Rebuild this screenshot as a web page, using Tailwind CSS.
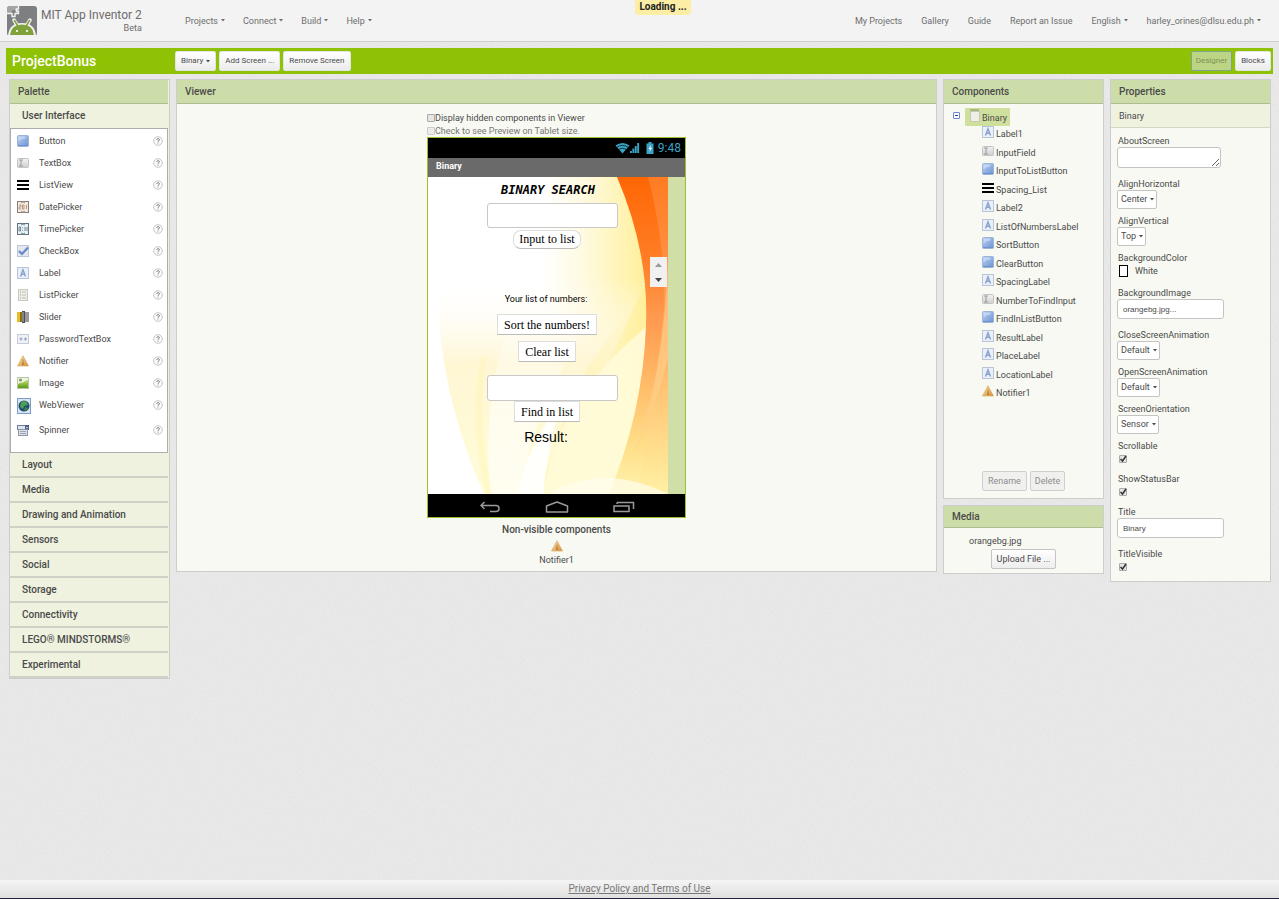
<!DOCTYPE html>
<html lang="en">
<head>
<meta charset="utf-8">
<title>MIT App Inventor 2</title>
<script src="https://cdn.jsdelivr.net/npm/@tailwindcss/browser@4"></script>
</head>
<body class="relative isolate flex min-h-screen flex-col bg-[#eaeaea] font-['Roboto',sans-serif] text-[9px] leading-3 text-[#4a4a4a]">

<svg class="absolute inset-0 -z-10 h-full w-full opacity-10" aria-hidden="true">
  <filter id="grain"><feTurbulence type="fractalNoise" baseFrequency="0.6" numOctaves="2"/><feColorMatrix type="saturate" values="0"/></filter>
  <rect width="100%" height="100%" filter="url(#grain)"/>
</svg>

<!-- Icon library -->
<svg class="absolute size-0" aria-hidden="true">
  <defs>
    <linearGradient id="gBlue" x1="0" y1="0" x2="1" y2="1"><stop offset="0" stop-color="#b9d0f2"/><stop offset="1" stop-color="#6d93d3"/></linearGradient>
    <linearGradient id="gGrey" x1="0" y1="0" x2="0" y2="1"><stop offset="0" stop-color="#f2f2f2"/><stop offset="1" stop-color="#cfcfcf"/></linearGradient>
    <linearGradient id="gWarn" x1="0" y1="0" x2="1" y2="1"><stop offset="0" stop-color="#fbe7b0"/><stop offset="1" stop-color="#d98a2b"/></linearGradient>
    <linearGradient id="gGreen" x1="0" y1="0" x2="0" y2="1"><stop offset="0" stop-color="#c3df70"/><stop offset="1" stop-color="#5c9a16"/></linearGradient>
  </defs>
  <symbol id="i-button" viewBox="0 0 12 12"><rect x=".5" y=".5" width="11" height="11" rx="1" fill="url(#gBlue)" stroke="#9db4da"/><path d="M1 10h10v1H1z" fill="#6e90cb"/><path d="M1.500 1.500h7v2q-4 .2-7 3z" fill="#d5e3f8" opacity=".6"/></symbol>
  <symbol id="i-textbox" viewBox="0 0 12 12"><rect x=".5" y="1.500" width="11" height="9" rx="1" fill="url(#gGrey)" stroke="#c4c4c4"/><path d="M2 3h4M2 9h4M4 3v6" stroke="#9a9a9a" fill="none"/></symbol>
  <symbol id="i-listview" viewBox="0 0 12 12"><path d="M0 2h12M0 6h12M0 10h12" stroke="#000" stroke-width="2"/></symbol>
  <symbol id="i-date" viewBox="0 0 12 12"><rect x=".5" y=".5" width="11" height="11" fill="#f3e9df" stroke="#8a7f78"/><path d="M2 4h2v2H2v2h2M5.500 4h1.500v4H5.500zM9.500 4v4M4 2l2-1 2 1M4 10l2 1 2-1" stroke="#b59a88" fill="none"/></symbol>
  <symbol id="i-time" viewBox="0 0 12 12"><rect x=".5" y=".5" width="11" height="11" fill="#e6eff4" stroke="#68747c"/><path d="M2 4h1.500v4H2zM5.500 4.500v.8M5.500 7v.8M8 4v4M10 4v4M4 2l2-1 2 1M4 10l2 1 2-1" stroke="#6f8c9d" fill="none"/></symbol>
  <symbol id="i-check" viewBox="0 0 12 12"><rect x=".5" y=".5" width="11" height="11" fill="#e3e8f1" stroke="#bcc6d8"/><path d="M2 6l3 3 6-6.500" stroke="#6487c8" stroke-width="2.200" fill="none"/></symbol>
  <symbol id="i-label" viewBox="0 0 12 12"><rect x=".5" y=".5" width="11" height="11" fill="#eaf0f8" stroke="#b9c4d8"/><path d="M3.500 9.500L6 2.800l2.500 6.700M4.300 7.300h3.400" stroke="#8aa2d0" stroke-width="1.500" fill="none"/></symbol>
  <symbol id="i-listpicker" viewBox="0 0 12 12"><rect x="1.500" y=".5" width="9" height="11" fill="#efefe9" stroke="#c9c9c0"/><path d="M3 3h1M3 6h1M3 9h1" stroke="#86a75c"/><path d="M5 3h4M5 6h4M5 9h4" stroke="#bbb"/></symbol>
  <symbol id="i-slider" viewBox="0 0 12 12"><path d="M0 1h5v10H0z" fill="#e5bd25"/><path d="M3 1h2v10H3z" fill="#8b7018"/><path d="M5 0h3v12H5z" fill="#4e4e4e"/><path d="M8 1h4v10H8z" fill="#9a9a9a"/><path d="M6 1v10" stroke="#bbb"/></symbol>
  <symbol id="i-password" viewBox="0 0 12 12"><rect x=".5" y="1.500" width="11" height="9" fill="#eef1f6" stroke="#c5ccd8"/><path d="M2.500 6h3M7 6h3M4 4.500v3M8.500 4.500v3" stroke="#8fa2c4" stroke-width="1.200"/></symbol>
  <symbol id="i-warn" viewBox="0 0 12 12"><path d="M6 .8L11.500 11H.5z" fill="url(#gWarn)" stroke="#d3ad68" stroke-width=".7"/><path d="M6 3l1 7H5z" fill="#a8824e"/></symbol>
  <symbol id="i-image" viewBox="0 0 12 12"><rect x=".5" y=".5" width="11" height="11" fill="#eef4e0" stroke="#b9c6a4"/><path d="M1 7q3-2 5-1.500Q8 3 11 3v8H1z" fill="url(#gGreen)"/><circle cx="3.500" cy="3" r="1.500" fill="#7f9958"/></symbol>
  <symbol id="i-web" viewBox="0 0 14 16"><rect x=".5" y=".5" width="13" height="15" fill="#d8e5f5" stroke="#7e9cc4"/><circle cx="7" cy="8" r="5.500" fill="#244a74"/><path d="M4 4q3-2 6 0l1 3-4 1-1 3-3-2z" fill="#4ca055"/><path d="M8 9l3 1-2 3-2-1z" fill="#3a8a45"/></symbol>
  <symbol id="i-spinner" viewBox="0 0 12 12"><rect x=".5" y="1.500" width="11" height="4" fill="#dfe6f0" stroke="#6b7c99"/><path d="M8 1h4v5H8z" fill="#4c6089"/><path d="M9 3h2l-1 1.500z" fill="#fff"/><rect x="1.500" y="5.500" width="9" height="6" fill="#dcdfe4" stroke="#8d97a8"/><path d="M3 7.500h6M3 9.500h6" stroke="#9aa6ba"/></symbol>
  <symbol id="i-screen" viewBox="0 0 12 14"><path d="M1 0h9v3H1z" fill="#a9b87c"/><rect x="1.500" y="2.500" width="9" height="10" fill="#efefe8" stroke="#c3c9b2"/></symbol>
  <symbol id="i-help" viewBox="0 0 10 10"><circle cx="5" cy="5" r="4.300" fill="#fbfbfb" stroke="#b8b8b8" stroke-width=".8"/><path d="M3.700 4q0-1.400 1.400-1.400T6.400 4Q6.400 4.700 5 5.300v.6M5 6.600v1" stroke="#8a8a8a" stroke-width="1" fill="none"/></symbol>
  <symbol id="i-caret" viewBox="0 0 4 3"><path d="M0 0h4L2 2.500z" fill="currentColor"/></symbol>
</svg>

<div role="status" class="absolute left-[635px] top-0 z-10 h-[15px] w-14 rounded-b-sm bg-[#fdeea6] text-center text-[10px] font-bold leading-[14px] text-[#222]">Loading ...</div>

<header class="flex h-[42px] items-center border-b border-[#cfcfcf] bg-[#f3f3f3] text-[#6d6d6d]">
  <a href="#" class="flex w-[176px] shrink-0 items-center gap-1 pl-[7px]">
    <svg class="size-[30px]" viewBox="0 0 30 30" aria-hidden="true">
      <rect width="30" height="30" rx="3" fill="#7d7f81"/>
      <path d="M0 7h5q-1-3 2-3t2 3h2V0H3Q0 0 0 3z" fill="#a3a5a6"/>
      <path d="M0 7.500h5v3h3v-3h3.500V5.200H9.300V3h2.200V0" fill="none" stroke="#f3f3f3" stroke-width="1.400"/>
      <path d="M7 14l3 5M23 14l-3 5" stroke="#f3f3f3" stroke-width="3.500" stroke-linecap="round"/>
      <path d="M1 30Q2 17 15 17t14 13z" fill="#f3f3f3"/>
      <path d="M3 29Q4 18.500 15 18.500T27 29z" fill="#7fa33a"/>
      <path d="M7.500 14.500l3 5M22.500 14.500l-3 5" stroke="#7fa33a" stroke-width="1.500" stroke-linecap="round"/>
      <circle cx="10" cy="25" r="1.100" fill="#fff"/><circle cx="20" cy="25" r="1.100" fill="#fff"/>
    </svg>
    <span class="flex flex-col items-end"><span class="text-[12px] leading-[14px]">MIT App Inventor 2</span><span class="text-[9px] leading-3">Beta</span></span>
  </a>
  <nav class="flex flex-1 items-center justify-between pl-[9px] pr-[18px]">
    <div class="flex gap-[18px]">
      <button class="flex items-center gap-[3px]">Projects <svg class="h-[3px] w-1"><use href="#i-caret"/></svg></button>
      <button class="flex items-center gap-[3px]">Connect <svg class="h-[3px] w-1"><use href="#i-caret"/></svg></button>
      <button class="flex items-center gap-[3px]">Build <svg class="h-[3px] w-1"><use href="#i-caret"/></svg></button>
      <button class="flex items-center gap-[3px]">Help <svg class="h-[3px] w-1"><use href="#i-caret"/></svg></button>
    </div>
    <div class="flex gap-[19px]">
      <a href="#">My Projects</a><a href="#">Gallery</a><a href="#">Guide</a><a href="#">Report an Issue</a>
      <button class="flex items-center gap-[3px]">English <svg class="h-[3px] w-1"><use href="#i-caret"/></svg></button>
      <button class="flex items-center gap-[3px]">harley_orines@dlsu.edu.ph <svg class="h-[3px] w-1"><use href="#i-caret"/></svg></button>
    </div>
  </nav>
</header>

<div class="mx-1.5 mt-1.5 flex h-[26px] items-center bg-[#8fc204] pr-0.5 text-[8px]">
  <h1 class="w-[169px] pl-1.5 text-[14px] font-medium text-white">ProjectBonus</h1>
  <div class="flex gap-[3px]">
    <button class="flex h-5 items-center gap-[3px] rounded-xs border border-[#e4e4e4] bg-linear-to-b from-white to-[#ececec] px-[5px]">Binary <svg class="h-[3px] w-1"><use href="#i-caret"/></svg></button>
    <button class="h-5 rounded-xs border border-[#e4e4e4] bg-linear-to-b from-white to-[#ececec] px-[5px]">Add Screen ...</button>
    <button class="h-5 rounded-xs border border-[#e4e4e4] bg-linear-to-b from-white to-[#ececec] px-[5px]">Remove Screen</button>
  </div>
  <div class="ml-auto flex gap-[3px]">
    <button disabled class="h-5 rounded-xs border border-[#7fa58a] bg-[#bcd585] px-1 text-[#7d9155]">Designer</button>
    <button class="h-5 rounded-xs border border-[#e4e4e4] bg-linear-to-b from-white to-[#ececec] px-[5px]">Blocks</button>
  </div>
</div>

<main class="flex flex-1 items-start gap-1.5 pl-[9px] pr-2 pt-[5px]">

  <section class="w-[161px] shrink-0 border border-[#cdcdcd] bg-[#eef2df] pr-px">
    <h2 class="h-6 border-b border-[#aebd92] bg-[#cddda9] pl-2 text-[10px] font-medium leading-[23px]">Palette</h2>
    <h3 class="h-6 pl-3 text-[10px] font-medium leading-6">User Interface</h3>
    <ul id="palette" class="border border-[#adadad] bg-white pb-[11px] pl-1.5 pr-1 pt-px"></ul>
    <div id="drawers"></div>
  </section>

  <section class="min-w-0 flex-1 border border-[#cdcdcd] bg-[#f7f9f2]">
    <h2 class="h-6 border-b border-[#aebd92] bg-[#cddda9] pl-2 text-[10px] font-medium leading-[23px]">Viewer</h2>
    <div class="mx-auto w-[259px] pb-[5px] pt-[7px]">
      <label class="flex h-[13px] items-center"><input type="checkbox" class="size-2 shrink-0 appearance-none rounded-[1px] border border-[#a9a9a9] bg-[#e6e6e6]">Display hidden components in Viewer</label>
      <label class="flex h-[13px] items-center pt-px text-[#777]"><input type="checkbox" class="size-2 shrink-0 appearance-none rounded-[1px] border border-[#ccc] bg-[#ececec]">Check to see Preview on Tablet size.</label>

      <div class="border border-[#9cc02b]">
        <div class="flex h-5 items-center justify-end bg-black pr-1 text-[12px] text-[#3ba4c4]">
          <svg class="h-3 w-[25px]" viewBox="0 0 25 12" aria-hidden="true">
            <path d="M.5 3.500Q7.500-1.500 14.500 3.500L7.500 11.500z" fill="currentColor"/><path d="M2 5.200Q7.500 1.500 13 5.200M4 7.300Q7.500 5 11 7.300" fill="none" stroke="#000" stroke-width=".7"/>
            <path d="M15 11V9h1.900v2zM17.400 11V6.500h1.900V11zM19.800 11V4h1.900v7zM22.200 11V1h1.900v10z" fill="currentColor"/>
          </svg>
          <svg class="ml-1.5 mr-1 h-3 w-2" viewBox="0 0 8 12" aria-hidden="true"><path d="M2.500 0h3v1.500H7.500V12H.5V1.500h2z" fill="currentColor"/><path d="M5 3L2.500 7H4l-.7 3L6 6H4.500z" fill="#fff"/></svg>
          9:48
        </div>
        <div class="h-[19px] bg-[#6a6a6a] pl-2 text-[9px] font-bold leading-[17px] text-white">Binary</div>
        <div class="flex h-[317px] bg-[#d0dea8]">
          <div class="relative isolate w-[240px] overflow-hidden bg-white">
            <svg class="absolute inset-0 -z-10 h-full w-full" viewBox="0 0 240 317" preserveAspectRatio="none" aria-hidden="true">
              <defs>
                <linearGradient id="bgWarm" x1="0" x2="1"><stop offset=".48" stop-color="#fff"/><stop offset=".65" stop-color="#fffae0"/><stop offset=".9" stop-color="#fff09c"/></linearGradient>
                <linearGradient id="bgLeaf" x1="0" y1="0" x2="0" y2="1"><stop offset="0" stop-color="#fff" stop-opacity="0"/><stop offset=".4" stop-color="#fff6d4"/><stop offset="1" stop-color="#fffcd8"/></linearGradient>
                <linearGradient id="bgArc" x1="0" y1="0" x2="0" y2="1"><stop offset="0" stop-color="#ff6604"/><stop offset=".25" stop-color="#ff7d25"/><stop offset=".45" stop-color="#ff9a50"/><stop offset=".65" stop-color="#ffbb67"/><stop offset=".85" stop-color="#ffdf8a"/><stop offset="1" stop-color="#fff3ad"/></linearGradient>
                <linearGradient id="bgEdge" x1="0" y1="0" x2="0" y2="1"><stop offset="0" stop-color="#ff852e"/><stop offset=".3" stop-color="#ff9a52"/><stop offset=".6" stop-color="#ffbd70"/><stop offset="1" stop-color="#ffefa0"/></linearGradient>
                <linearGradient id="bgFade" x1="0" y1="0" x2="0" y2="1"><stop offset="0" stop-color="#fff0a0" stop-opacity="0"/><stop offset="1" stop-color="#fff7b4"/></linearGradient>
                <linearGradient id="bgGlow" x1="0" y1="0" x2="0" y2="1"><stop offset="0" stop-color="#fff" stop-opacity="0"/><stop offset=".6" stop-color="#fff"/></linearGradient>
              </defs>
              <path d="M0 0h240v317H0z" fill="url(#bgWarm)"/>
              <path d="M10 100Q8 210 56 317H120Q170 210 220 100z" fill="url(#bgLeaf)"/>
              <path d="M100 110Q52 190 62 317H92Q104 235 150 165Q135 135 120 110z" fill="url(#bgGlow)" opacity=".6"/>
              <path d="M53 180Q40 240 58 317h6Q48 240 58 180z" fill="#fff3a8" opacity=".35"/>
              <path d="M218 120Q165 170 145 220T112 317h75L222 200z" fill="url(#bgFade)"/>
              <path d="M218 150Q170 190 145 232Q120 275 116 317h66Q215 240 218 150z" fill="#fffcdc" opacity=".85"/>
              <path d="M90 317Q98 270 135 222Q118 272 116 317z" fill="#fff" opacity=".9"/>
              <path d="M189 0Q221 75 218 148Q215 235 181 317H240V0z" fill="url(#bgArc)"/>
              <path d="M220 0Q238 70 236 130Q230 200 210 317H240V0z" fill="url(#bgEdge)" opacity=".7"/>
              <path d="M240 75Q237 200 204 280Q232 220 240 180z" fill="#ffd08c" opacity=".6"/>
              <path d="M120 317Q175 285 240 317z" fill="#fffef0" opacity=".7"/>
            </svg>
            <div class="flex flex-col items-center pt-[5px] text-black">
              <p class="font-['DejaVu_Sans_Mono',monospace] text-[12px] font-bold italic leading-4">BINARY SEARCH</p>
              <input aria-label="InputField" class="ml-2 mt-[5px] h-[25px] w-[131px] rounded-[3px] border border-[#c8c8c8] bg-white px-1">
              <button class="mr-0.5 mt-0.5 h-[19px] rounded-lg border border-[#ddd] border-b-[#bbb] bg-white px-[5px] font-['Liberation_Serif',serif] text-[12px] leading-[15px]">Input to list</button>
              <div class="mr-px mt-2 flex h-[30px] w-[17px] flex-col items-center justify-around self-end bg-[#f1f1f1]" aria-hidden="true">
                <svg class="h-1 w-[7px]" viewBox="0 0 7 4"><path d="M0 4h7L3.500 0z" fill="#999"/></svg>
                <svg class="h-1 w-[7px]" viewBox="0 0 7 4"><path d="M0 0h7L3.500 4z" fill="#444"/></svg>
              </div>
              <p class="mr-1 mt-[6px] text-[9px]">Your list of numbers:</p>
              <button class="mr-0.5 mt-[9px] h-[21px] border border-[#ddd] border-b-[#bbb] bg-white px-[6px] font-['Liberation_Serif',serif] text-[12px]">Sort the numbers!</button>
              <button class="mr-0.5 mt-1.5 h-[21px] border border-[#ddd] border-b-[#bbb] bg-white px-[6px] font-['Liberation_Serif',serif] text-[12px]">Clear list</button>
              <input aria-label="NumberToFindInput" class="ml-2 mt-[13px] h-[26px] w-[131px] rounded-[3px] border border-[#c8c8c8] bg-white px-1">
              <button class="mr-0.5 h-[21px] border border-[#ddd] border-b-[#bbb] bg-white px-[6px] font-['Liberation_Serif',serif] text-[12px]">Find in list</button>
              <p class="mr-1 mt-[7px] font-['Liberation_Sans',sans-serif] text-[14px] leading-4">Result:</p>
            </div>
          </div>
        </div>
        <div class="flex h-[23px] items-center justify-center gap-11 bg-black pt-0.5 text-[#9a9a9a]">
          <svg class="h-3 w-[22px]" viewBox="0 0 22 12" fill="none" stroke="currentColor" stroke-width="1.500" aria-hidden="true"><path d="M5.500 1L2 4.500 5.500 8M2 4.500h15q3 0 3 3T17 10.500h-6"/></svg>
          <svg class="h-3 w-6" viewBox="0 0 24 12" fill="none" stroke="currentColor" stroke-width="1.500" aria-hidden="true"><path d="M1.500 11V5L12 1l10.500 4v6z" stroke-linejoin="round"/></svg>
          <svg class="h-3 w-[22px]" viewBox="0 0 22 12" fill="none" stroke="currentColor" stroke-width="1.500" aria-hidden="true"><path d="M1 5h15v5.500H1zM4 1.500h16.500V8M4 1.500v1.500"/></svg>
        </div>
      </div>
      <div class="flex flex-col items-center">
        <p class="mt-[6px] text-[10px] font-medium">Non-visible components</p>
        <svg class="mt-1 h-3 w-3"><use href="#i-warn"/></svg>
        <p class="mt-0.5">Notifier1</p>
      </div>
    </div>
  </section>

  <div class="flex w-[161px] shrink-0 flex-col gap-1.5">
    <section class="border border-[#cdcdcd] bg-[#f7f9f2] pb-[7px]">
      <h2 class="h-6 border-b border-[#aebd92] bg-[#cddda9] pl-2 text-[10px] font-medium leading-[23px]">Components</h2>
      <div class="flex pl-[9px] pt-1">
        <button aria-label="Collapse Binary" class="mt-1 flex size-[7px] items-center rounded-[1px] border border-[#6f87cc] bg-white px-px"><span class="h-px w-full bg-[#2244b5]"></span></button>
        <div class="ml-[5px] flex h-[18px] items-start rounded-[1px] bg-[#cfdf9c] pl-1 pr-[3px]">
          <svg class="mt-px h-[14px] w-3"><use href="#i-screen"/></svg><span class="pl-px pt-1">Binary</span>
        </div>
      </div>
      <ul id="tree" class="flex h-[278px] flex-col pl-[38px]"></ul>
      <div class="mt-[67px] flex gap-[3px] pl-[38px] text-[#8d8d8d]">
        <button disabled class="h-5 rounded-xs border border-[#cfcfcf] bg-[#f0f0ee] px-[5px]">Rename</button>
        <button disabled class="h-5 rounded-xs border border-[#cfcfcf] bg-[#f0f0ee] px-1">Delete</button>
      </div>
    </section>
    <section class="border border-[#cdcdcd] bg-[#f7f9f2] pb-1">
      <h2 class="h-[22px] border-b border-[#aebd92] bg-[#cddda9] pl-2 text-[10px] font-medium leading-[22px]">Media</h2>
      <p class="pl-[25px] pt-[7px]">orangebg.jpg</p>
      <button class="mx-auto mt-0.5 block h-5 rounded-xs border border-[#c4c4c4] bg-linear-to-b from-white to-[#ededed] px-[5px]">Upload File ...</button>
    </section>
  </div>

  <section class="w-[161px] shrink-0 border border-[#cdcdcd] bg-[#f7f9f2] pb-[10px]">
    <h2 class="h-6 border-b border-[#aebd92] bg-[#cddda9] pl-2 text-[10px] font-medium leading-[23px]">Properties</h2>
    <p class="h-6 border-b border-[#d2d8c2] bg-[#eef2df] pl-2 leading-6">Binary</p>
    <form class="flex flex-col items-start pl-1.5 pt-2 leading-[11px]">
      <label for="about" class="px-px">AboutScreen</label>
      <textarea id="about" class="mb-[11px] h-[21px] w-[104px] resize rounded-[3px] border border-[#c4c4c4] bg-white"></textarea>

      <label for="ah" class="px-px">AlignHorizontal</label>
      <span class="mb-[7px] grid items-center"><select id="ah" class="col-start-1 row-start-1 h-[19px] w-10 appearance-none rounded-xs border border-[#c4c4c4] bg-white pl-[3px]"><option>Center</option></select><svg class="pointer-events-none col-start-1 row-start-1 mr-[3px] h-[3px] w-1 justify-self-end"><use href="#i-caret"/></svg></span>

      <label for="av" class="px-px">AlignVertical</label>
      <span class="mb-[7px] grid items-center"><select id="av" class="col-start-1 row-start-1 h-[19px] w-[29px] appearance-none rounded-xs border border-[#c4c4c4] bg-white pl-[3px]"><option>Top</option></select><svg class="pointer-events-none col-start-1 row-start-1 mr-[3px] h-[3px] w-1 justify-self-end"><use href="#i-caret"/></svg></span>

      <span class="px-px">BackgroundColor</span>
      <button type="button" class="mb-[10px] flex h-[14px] items-center gap-[7px] pl-0.5"><span class="h-3 w-[9px] border border-black bg-white"></span>White</button>

      <label for="bi" class="px-px">BackgroundImage</label>
      <input id="bi" value="orangebg.jpg..." class="mb-[11px] h-5 w-[107px] rounded-[3px] border border-[#c4c4c4] bg-white px-[5px] font-['Liberation_Sans',sans-serif] text-[8px]">

      <label for="ca" class="px-px">CloseScreenAnimation</label>
      <span class="mb-[7px] grid items-center"><select id="ca" class="col-start-1 row-start-1 h-[19px] w-[43px] appearance-none rounded-xs border border-[#c4c4c4] bg-white pl-[3px]"><option>Default</option></select><svg class="pointer-events-none col-start-1 row-start-1 mr-[3px] h-[3px] w-1 justify-self-end"><use href="#i-caret"/></svg></span>

      <label for="oa" class="px-px">OpenScreenAnimation</label>
      <span class="mb-[7px] grid items-center"><select id="oa" class="col-start-1 row-start-1 h-[19px] w-[43px] appearance-none rounded-xs border border-[#c4c4c4] bg-white pl-[3px]"><option>Default</option></select><svg class="pointer-events-none col-start-1 row-start-1 mr-[3px] h-[3px] w-1 justify-self-end"><use href="#i-caret"/></svg></span>

      <label for="so" class="px-px">ScreenOrientation</label>
      <span class="mb-[7px] grid items-center"><select id="so" class="col-start-1 row-start-1 h-[19px] w-[42px] appearance-none rounded-xs border border-[#c4c4c4] bg-white pl-[3px]"><option>Sensor</option></select><svg class="pointer-events-none col-start-1 row-start-1 mr-[3px] h-[3px] w-1 justify-self-end"><use href="#i-caret"/></svg></span>

      <label for="sc" class="px-px">Scrollable</label>
      <span class="mb-[11px] grid h-[11px] items-end pl-0.5"><input id="sc" type="checkbox" checked class="peer col-start-1 row-start-1 size-2 appearance-none rounded-[1px] border border-[#aaa] bg-[#e4e4e4]"><svg class="pointer-events-none invisible col-start-1 row-start-1 size-2 peer-checked:visible" viewBox="0 0 8 8"><path d="M1.500 4l2 2L7 1" stroke="#333" stroke-width="1.500" fill="none"/></svg></span>

      <label for="ss" class="px-px">ShowStatusBar</label>
      <span class="mb-[11px] grid h-[11px] items-end pl-0.5"><input id="ss" type="checkbox" checked class="peer col-start-1 row-start-1 size-2 appearance-none rounded-[1px] border border-[#aaa] bg-[#e4e4e4]"><svg class="pointer-events-none invisible col-start-1 row-start-1 size-2 peer-checked:visible" viewBox="0 0 8 8"><path d="M1.500 4l2 2L7 1" stroke="#333" stroke-width="1.500" fill="none"/></svg></span>

      <label for="ti" class="px-px">Title</label>
      <input id="ti" value="Binary" class="mb-[11px] h-5 w-[107px] rounded-[3px] border border-[#c4c4c4] bg-white px-[5px] font-['Liberation_Sans',sans-serif] text-[8px]">

      <label for="tv" class="px-px">TitleVisible</label>
      <span class="grid h-[11px] items-end pl-0.5"><input id="tv" type="checkbox" checked class="peer col-start-1 row-start-1 size-2 appearance-none rounded-[1px] border border-[#aaa] bg-[#e4e4e4]"><svg class="pointer-events-none invisible col-start-1 row-start-1 size-2 peer-checked:visible" viewBox="0 0 8 8"><path d="M1.500 4l2 2L7 1" stroke="#333" stroke-width="1.500" fill="none"/></svg></span>
    </form>
  </section>
</main>

<footer class="h-[19px] border-b border-[#23233f] bg-linear-to-b from-[#f5f5f5] to-[#e0e0e0] text-center leading-[18px] text-[#777]"><a href="#" class="text-[10px] underline">Privacy Policy and Terms of Use</a></footer>

<script>
const palette = [['button','Button'],['textbox','TextBox'],['listview','ListView'],['date','DatePicker'],['time','TimePicker'],['check','CheckBox'],['label','Label'],['listpicker','ListPicker'],['slider','Slider'],['password','PasswordTextBox'],['warn','Notifier'],['image','Image'],['web','WebViewer'],['spinner','Spinner']];
document.getElementById('palette').innerHTML = palette.map(([icon, name]) => {
  const web = icon === 'web';
  return `<li class="${web ? 'flex h-[25px] items-start' : 'flex h-[22px] items-center'}">
    <span class="w-[22px] shrink-0"><svg class="${web ? 'mt-1 h-4 w-[14px]' : 'size-3'}"><use href="#i-${icon}"/></svg></span>
    <span class="${web ? 'mt-[5px] flex-1' : 'flex-1'}">${name}</span>
    <button aria-label="Help for ${name}" class="${web ? 'mt-1.5' : ''}"><svg class="size-[10px]"><use href="#i-help"/></svg></button></li>`;
}).join('');
document.getElementById('drawers').innerHTML = ['Layout','Media','Drawing and Animation','Sensors','Social','Storage','Connectivity','LEGO® MINDSTORMS®','Experimental'].map(n =>
  `<button class="block h-[25px] w-full border-b-2 border-[#cdd1c6] pl-3 text-left text-[10px] font-medium">${n}</button>`).join('');
const tree = [['label','Label1'],['textbox','InputField'],['button','InputToListButton'],['listview','Spacing_List'],['label','Label2'],['label','ListOfNumbersLabel'],['button','SortButton'],['button','ClearButton'],['label','SpacingLabel'],['textbox','NumberToFindInput'],['button','FindInListButton'],['label','ResultLabel'],['label','PlaceLabel'],['label','LocationLabel'],['warn','Notifier1']];
document.getElementById('tree').innerHTML = tree.map(([icon, name]) =>
  `<li class="flex flex-1 items-start gap-0.5"><svg class="size-3"><use href="#i-${icon}"/></svg><span class="pt-0.5">${name}</span></li>`).join('');
</script>
</body>
</html>
